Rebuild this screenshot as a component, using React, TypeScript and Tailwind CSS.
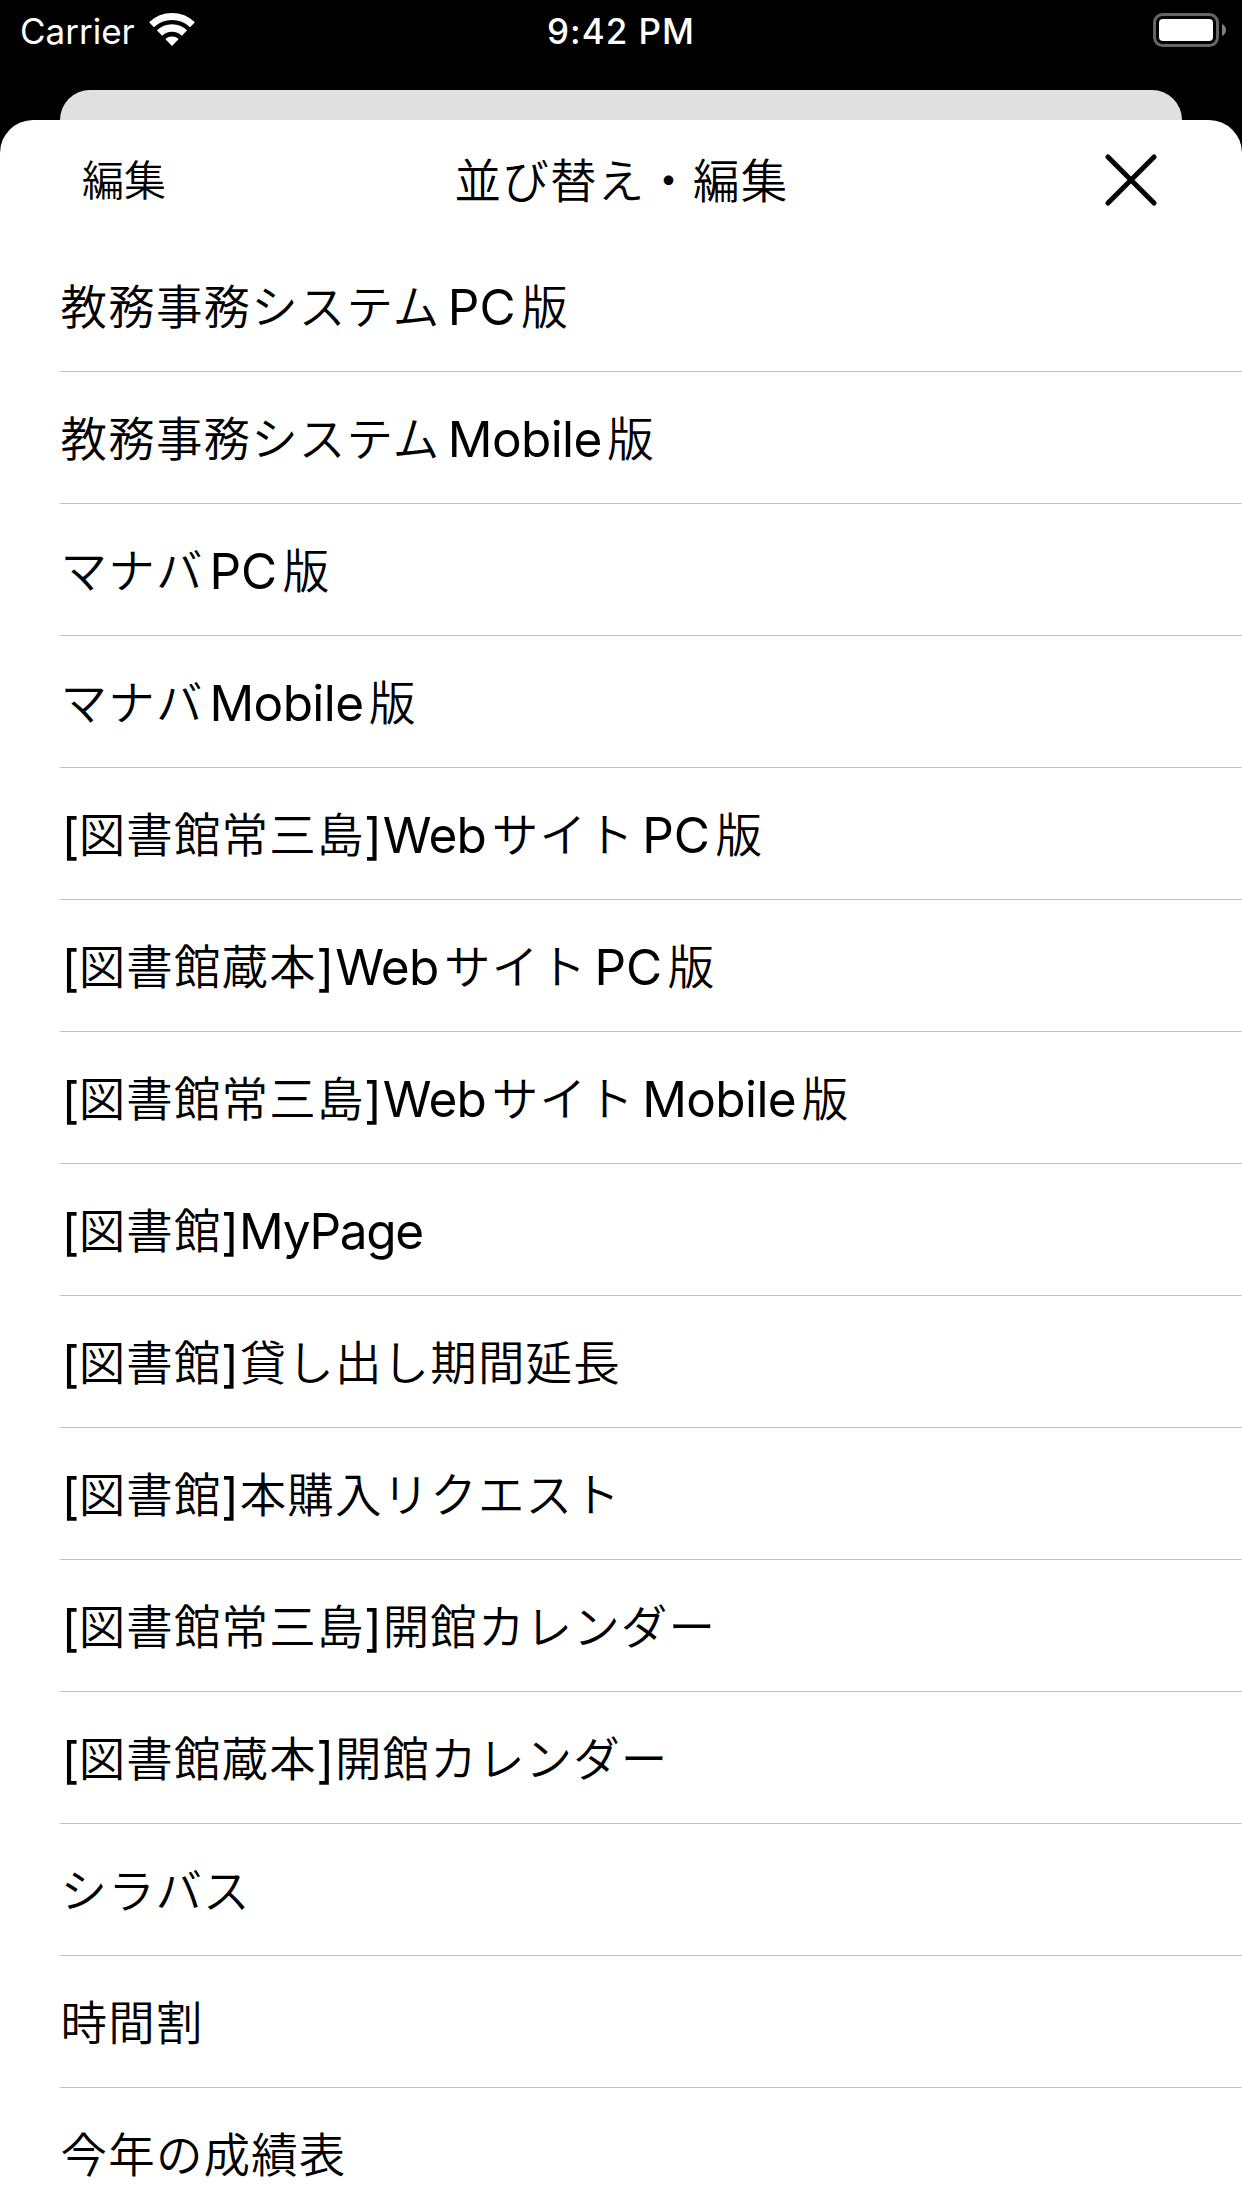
type Kind = "cjk" | "bracket" | "latin";

const items: string[] = [
  "教務事務システムPC版",
  "教務事務システムMobile版",
  "マナバPC版",
  "マナバMobile版",
  "[図書館常三島]WebサイトPC版",
  "[図書館蔵本]WebサイトPC版",
  "[図書館常三島]WebサイトMobile版",
  "[図書館]MyPage",
  "[図書館]貸し出し期間延長",
  "[図書館]本購入リクエスト",
  "[図書館常三島]開館カレンダー",
  "[図書館蔵本]開館カレンダー",
  "シラバス",
  "時間割",
  "今年の成績表",
];

const cjkFont =
  "font-['Noto_Sans_CJK_JP_DemiLight','Noto_Sans_CJK_JP',sans-serif]";

function kindOf(part: string): Kind {
  if (/^[A-Za-z]/.test(part)) return "latin";
  if (part === "[" || part === "]") return "bracket";
  return "cjk";
}

const latinTracking: Record<string, string> = {
  PC: "tracking-normal",
  Mobile: "tracking-[-0.6px]",
  Web: "ml-[0.8px] tracking-[-0.7px]",
  MyPage: "tracking-[-1.3px]",
};

/** Gap between a Japanese run and the Latin word after it. */
function leadingGap(previous: string | undefined) {
  if (!previous || kindOf(previous) !== "cjk") return "";
  return previous.endsWith("バ") ? "ml-[6.5px]" : "ml-[8px]";
}

/** Splits a title into Latin, bracket and Japanese runs and spaces the runs apart. */
function Title({ text }: { text: string }) {
  const parts = text.match(/[A-Za-z]+|[[\]]|[^A-Za-z[\]]+/g) ?? [];
  return (
    <>
      {parts.map((part, i) => {
        const kind = kindOf(part);
        if (kind === "cjk") {
          return (
            <span key={i} className={`${cjkFont} relative -top-px ml-[0.6px] mr-[-0.6px] text-[46.5px] leading-none tracking-[1.15px]`}>
              {part}
            </span>
          );
        }
        if (kind === "bracket") {
          return (
            <span key={i} className={`relative top-px leading-none ${part === "[" ? "left-[1.4px]" : ""}`}>
              {part}
            </span>
          );
        }
        const after = i < parts.length - 1 ? "mr-[5px]" : "";
        return (
          <span key={i} className={`${leadingGap(parts[i - 1])} ${after} ${latinTracking[part]} leading-none`}>
            {part}
          </span>
        );
      })}
    </>
  );
}

function WifiIcon() {
  return (
    <svg width="46" height="34" viewBox="0 0 46 34" fill="none" stroke="white">
      <path d="M2.5 11.8a29.5 29.5 0 0 1 41 0" strokeWidth="7" />
      <path d="M10.5 20.05a18 18 0 0 1 25 0" strokeWidth="7.6" />
      <path d="M23 33l-6.7-6.9a10.3 10.3 0 0 1 13.4 0z" fill="white" stroke="none" />
    </svg>
  );
}

function BatteryIcon() {
  return (
    <svg width="74" height="34" viewBox="0 0 74 34" fill="none">
      <rect x="1.5" y="1.5" width="63" height="31" rx="8" stroke="#666666" strokeWidth="3" />
      <rect x="6" y="6" width="54" height="22" rx="4" fill="white" />
      <path d="M69 11c2.6 1 4 3.4 4 6s-1.4 5-4 6z" fill="#808080" />
    </svg>
  );
}

function CloseIcon() {
  return (
    <svg width="52" height="52" viewBox="0 0 52 52" fill="none" stroke="black" strokeWidth="5" strokeLinecap="round">
      <path d="M3 3l46 46M49 3L3 49" />
    </svg>
  );
}

export default function App() {
  return (
    <div className="flex h-[2208px] w-[1242px] flex-col overflow-hidden bg-black font-[Inter,sans-serif]">
      <div className="grid h-[90px] shrink-0 grid-cols-3 items-start px-[20px] text-[35px] leading-[63px] text-white">
        <div className="flex gap-[14px]">
          <span>Carrier</span>
          <div className="pt-[13px]">
            <WifiIcon />
          </div>
        </div>
        <div className="text-center font-medium tracking-[1px]">9:42 PM</div>
        <div className="-mr-[5px] flex justify-end pt-[13px]">
          <BatteryIcon />
        </div>
      </div>

      <div className="mx-[60px] h-[30px] shrink-0 rounded-t-[30px] bg-[#e0e0e0]" />

      <main className="flex min-h-0 grow flex-col rounded-t-[33px] bg-white text-black">
        <header className={`${cjkFont} grid h-[120px] shrink-0 grid-cols-[1fr_auto_1fr] items-center pr-[85px] pb-[5px] pl-[82px]`}>
          <button className="justify-self-start text-[42px] leading-none">編集</button>
          <h1 className="pt-[2px] pl-[4px] text-[46.5px] leading-none tracking-[1.2px]">
            並び替え・編集
          </h1>
          <button className="mt-[4px] justify-self-end" aria-label="閉じる">
            <CloseIcon />
          </button>
        </header>
        <ul className="ml-[60px] flex flex-col">
          {items.map((item) => (
            <li
              key={item}
              className="h-[132px] shrink-0 border-b border-[#c3c3c5] text-[49.5px] leading-[134px] whitespace-nowrap"
            >
              <Title text={item} />
            </li>
          ))}
        </ul>
      </main>
    </div>
  );
}
